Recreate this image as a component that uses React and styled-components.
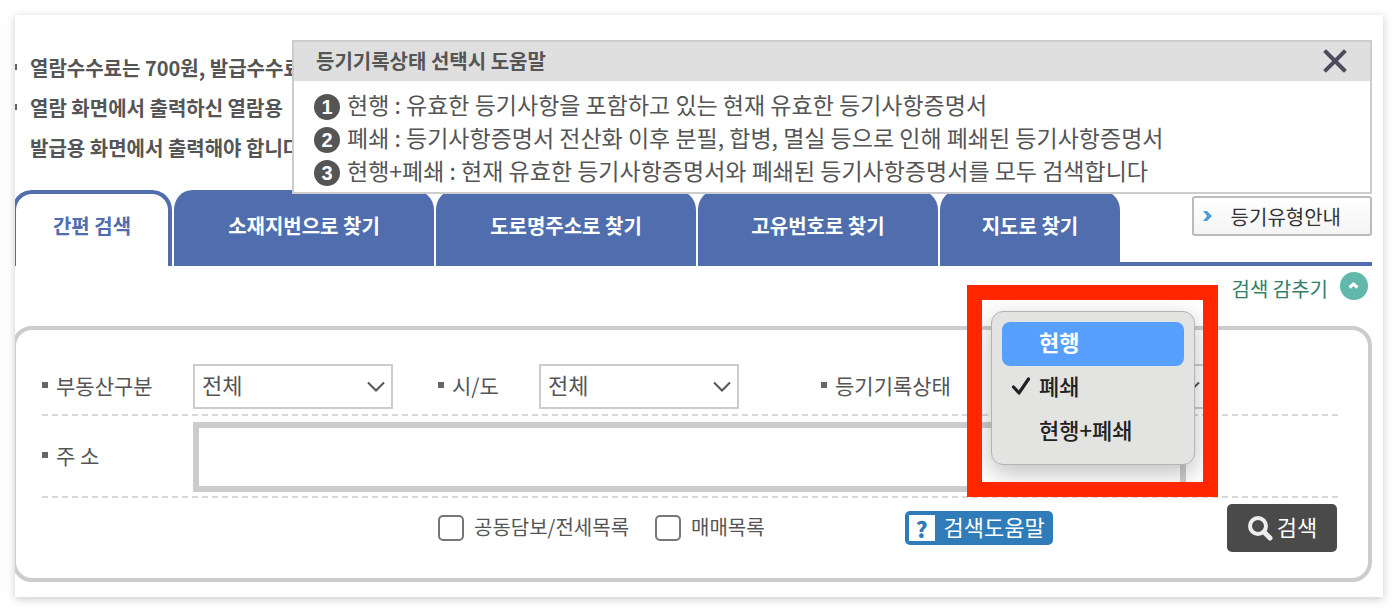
import { useState } from "react";
import styled, { createGlobalStyle } from "styled-components";

const tabs = [
	{ name: "간편 검색", width: 154 },
	{ name: "소재지번으로 찾기", width: 262 },
	{ name: "도로명주소로 찾기", width: 262 },
	{ name: "고유번호로 찾기", width: 242 },
	{ name: "지도로 찾기", width: 182 },
];

const statuses = ["현행", "폐쇄", "현행+폐쇄"];

const helpTexts = [
	"현행 : 유효한 등기사항을 포함하고 있는 현재 유효한 등기사항증명서",
	"폐쇄 : 등기사항증명서 전산화 이후 분필, 합병, 멸실 등으로 인해 폐쇄된 등기사항증명서",
	"현행+폐쇄 : 현재 유효한 등기사항증명서와 폐쇄된 등기사항증명서를 모두 검색합니다",
];

const StatusHelp = (props) => {
	const { setShow } = props;
	return (
		<HelpBox>
			<HelpHeader>
				<HelpTitle>등기기록상태 선택시 도움말</HelpTitle>
				<CloseButton aria-label="닫기" onClick={() => setShow(false)}>
					<svg width="26" height="26" viewBox="0 0 26 26">
						<path
							d="M4 3L22 21M22 3L4 21"
							stroke="#4d4b5c"
							strokeWidth="4"
							strokeLinecap="square"
						/>
					</svg>
				</CloseButton>
			</HelpHeader>
			<HelpList>
				{helpTexts.map((text, index) => (
					<HelpItem key={text}>
						<HelpNumber>{index + 1}</HelpNumber>
						<HelpText>{text}</HelpText>
					</HelpItem>
				))}
			</HelpList>
		</HelpBox>
	);
};

const StatusMenu = (props) => {
	const { status, setStatus } = props;
	const [active, setActive] = useState("현행");
	return (
		<Menu role="listbox" aria-label="등기기록상태">
			{statuses.map((name) => (
				<MenuItem
					key={name}
					type="button"
					role="option"
					aria-selected={status === name}
					$active={active === name}
					onMouseEnter={() => setActive(name)}
					onClick={() => setStatus(name)}
				>
					<MenuMark>
						{status === name && (
							<svg width="20" height="20" viewBox="0 0 20 20">
								<path
									d="M2.5 12L8 18L17.5 4"
									fill="none"
									stroke="#222"
									strokeWidth="3.2"
									strokeLinecap="round"
									strokeLinejoin="round"
								/>
							</svg>
						)}
					</MenuMark>
					{name}
				</MenuItem>
			))}
		</Menu>
	);
};

const SelectBox = (props) => {
	const { id, value, onChange, options, children } = props;
	return (
		<SelectWrap>
			<Select id={id} value={value} onChange={onChange}>
				{options.map((name) => (
					<option key={name}>{name}</option>
				))}
			</Select>
			<SelectArrow width="18" height="12" viewBox="0 0 18 12">
				<path
					d="M1 1.5L9 9.5L17 1.5"
					fill="none"
					stroke="#555"
					strokeWidth="2"
				/>
			</SelectArrow>
			{children}
		</SelectWrap>
	);
};

export default function App() {
	const [show, setShow] = useState(true);
	const [tab, setTab] = useState("간편 검색");
	const [status, setStatus] = useState("폐쇄");
	const [address, setAddress] = useState("");
	return (
		<>
			<GlobalStyle />
			<Page>
				<Notices>
					<Notice>열람수수료는 700원, 발급수수료</Notice>
					<Notice>
						열람 화면에서 출력하신 열람용
						<br />
						발급용 화면에서 출력해야 합니다
					</Notice>
				</Notices>
				{show && <StatusHelp setShow={setShow} />}
				<TabBar>
					{tabs.map((item) => (
						<Tab
							key={item.name}
							$width={item.width}
							$active={tab === item.name}
							onClick={() => setTab(item.name)}
						>
							{item.name}
						</Tab>
					))}
					<TabRest>
						<GuideButton>
							<svg width="10" height="12" viewBox="0 0 10 12">
								<path d="M0 1H4L9 6L4 11H0L4 6Z" fill="#4e9fd8" />
							</svg>
							<span>등기유형안내</span>
						</GuideButton>
					</TabRest>
				</TabBar>
				<HideRow>
					<HideLink href="#search">
						<HideText>검색 감추기</HideText>
						<svg width="28" height="28" viewBox="0 0 28 28">
							<circle cx="14" cy="14" r="14" fill="#61b9ab" />
							<path
								d="M9.5 15.5L13.5 12L17.5 15.5"
								fill="none"
								stroke="#fff"
								strokeWidth="3"
							/>
						</svg>
					</HideLink>
				</HideRow>
				<SearchPanel id="search" onSubmit={(e) => e.preventDefault()}>
					<FieldRow>
						<Label htmlFor="kind" $width={151}>
							부동산구분
						</Label>
						<SelectBox id="kind" options={["전체"]} />
						<Spacer $grow={45} />
						<Label htmlFor="city" $width={101}>
							시/도
						</Label>
						<SelectBox id="city" options={["전체"]} />
						<Spacer $grow={82} />
						<Label htmlFor="status" $width={187}>
							등기기록상태
						</Label>
						<SelectBox
							id="status"
							value={status}
							onChange={(e) => setStatus(e.target.value)}
							options={statuses}
						>
							<StatusMenu status={status} setStatus={setStatus} />
							<Highlight />
						</SelectBox>
						<Spacer $grow={134} />
					</FieldRow>
					<Divider />
					<FieldRow>
						<Label htmlFor="address" $width={151}>
							주 소
						</Label>
						<AddressInput
							id="address"
							value={address}
							onChange={(e) => setAddress(e.target.value)}
						/>
					</FieldRow>
					<Divider />
					<ActionRow>
						<CheckLabel>
							<CheckBox type="checkbox" />
							<CheckText>공동담보/전세목록</CheckText>
						</CheckLabel>
						<CheckLabel>
							<CheckBox type="checkbox" />
							<CheckText>매매목록</CheckText>
						</CheckLabel>
						<Spacer $grow={139} />
						<HelpButton type="button" onClick={() => setShow(true)}>
							<QuestionMark>?</QuestionMark>
							<ButtonText>검색도움말</ButtonText>
						</HelpButton>
						<Spacer $grow={173} />
						<SearchButton>
							<svg width="26" height="26" viewBox="0 0 26 26">
								<circle
									cx="11"
									cy="11"
									r="8"
									fill="none"
									stroke="#eee"
									strokeWidth="4"
								/>
								<path
									d="M17 17L23 23"
									stroke="#eee"
									strokeWidth="5"
									strokeLinecap="round"
								/>
							</svg>
							<ButtonText>검색</ButtonText>
						</SearchButton>
					</ActionRow>
				</SearchPanel>
			</Page>
		</>
	);
}

const GlobalStyle = createGlobalStyle`
	* {
		box-sizing: border-box;
	}
	body {
		margin: 0;
		background: #fefefe;
		color: #555;
		font-family: "Noto Sans CJK KR", sans-serif;
		font-size: 20px;
	}
	button, input, select {
		margin: 0;
		padding: 0;
		border: none;
		color: inherit;
		font: inherit;
	}
	button {
		cursor: pointer;
	}
	svg {
		display: block;
		flex: none;
	}
`;
const Page = styled.main`
	position: relative;
	margin: 15px;
	padding: 33px 11px 15px 0;
	min-width: 1280px;
	background: #fff;
	box-shadow: 0 2px 8px rgba(0, 0, 0, 0.2);
	overflow: hidden;
`;
const Notices = styled.ul`
	margin: 0 0 22px;
	padding: 0 0 0 15px;
	list-style: none;
	font-weight: bold;
	line-height: 40px;
`;
const Notice = styled.li`
	position: relative;
	&::before {
		content: "";
		position: absolute;
		top: 16px;
		left: -19px;
		width: 6px;
		height: 6px;
		background: #666;
	}
`;
const HelpBox = styled.section`
	position: absolute;
	top: 25px;
	left: 277px;
	right: 11px;
	z-index: 1;
	border: 2px solid #ccc;
	background: #fff;
`;
const HelpHeader = styled.div`
	display: flex;
	align-items: center;
	justify-content: space-between;
	height: 39px;
	padding: 0 22px;
	background: #dfdfdf;
`;
const HelpTitle = styled.h2`
	margin: 0;
	padding-bottom: 2px;
	font-size: 20px;
	font-weight: bold;
	line-height: 36px;
`;
const CloseButton = styled.button`
	background: none;
`;
const HelpList = styled.ol`
	margin: 0;
	padding: 9px 20px 3px;
	list-style: none;
	font-size: 23px;
`;
const HelpItem = styled.li`
	display: flex;
	align-items: center;
	gap: 7px;
	height: 33px;
	line-height: 33px;
`;
const HelpText = styled.span`
	padding-bottom: 4px;
	white-space: nowrap;
`;
const HelpNumber = styled.span`
	width: 26px;
	height: 26px;
	border-radius: 50%;
	background: #555;
	color: #fff;
	font-family: "Liberation Sans", sans-serif;
	font-size: 20px;
	font-weight: bold;
	line-height: 26px;
	text-align: center;
`;
const TabBar = styled.nav`
	display: flex;
	height: 76px;
`;
const Tab = styled.button`
	flex: none;
	width: ${(props) => props.$width}px;
	padding-bottom: 6px;
	border-radius: 20px 20px 0 0;
	background: #506eae;
	color: #fff;
	font-weight: bold;
	& + & {
		border-left: 2px solid #fff;
	}
	${(props) =>
		props.$active &&
		`
		padding-bottom: 10px;
		border: 4px solid #506eae;
		border-bottom: none;
		background: #fff;
		color: #506eae;
	`}
	&:first-child {
		margin-left: -3px;
		width: ${(props) => props.$width + 6}px;
	}
`;
const TabRest = styled.div`
	display: flex;
	flex: 1;
	align-items: flex-start;
	justify-content: flex-end;
	padding-top: 6px;
	border-bottom: 4px solid #506eae;
`;
const GuideButton = styled.button`
	display: flex;
	align-items: center;
	justify-content: space-between;
	width: 180px;
	height: 40px;
	padding: 0 29px 0 9px;
	border: 2px solid #bbb;
	border-radius: 3px;
	background: linear-gradient(#fff, #f4f4f4);
	color: #333;
`;
const HideRow = styled.div`
	display: flex;
	justify-content: flex-end;
	padding: 6px 4px 26px;
`;
const HideLink = styled.a`
	display: flex;
	align-items: center;
	gap: 12px;
	height: 28px;
	color: #2f8067;
	text-decoration: none;
`;
const HideText = styled.span`
	padding-top: 4px;
`;
const SearchPanel = styled.form`
	margin-left: -3px;
	padding: 34px 26px 26px;
	border: 4px solid #ccc;
	border-radius: 20px;
`;
const FieldRow = styled.div`
	display: flex;
	align-items: center;
	&:first-child {
		padding-bottom: 1px;
	}
`;
const Label = styled.label`
	display: flex;
	align-items: center;
	gap: 8px;
	flex: none;
	width: ${(props) => props.$width}px;
	padding-bottom: 4px;
	font-size: 21px;
	&::before {
		content: "";
		width: 6px;
		height: 6px;
		background: #666;
	}
`;
const Spacer = styled.div`
	flex: ${(props) => props.$grow} 1 0;
`;
const SelectWrap = styled.div`
	position: relative;
	flex: none;
	width: 200px;
	height: 45px;
`;
const Select = styled.select`
	width: 100%;
	height: 100%;
	padding: 0 32px 6px 7px;
	appearance: none;
	border: 2px solid #ccc;
	background: #fff;
	font-size: 22px;
`;
const SelectArrow = styled.svg`
	position: absolute;
	top: 17px;
	right: 8px;
	pointer-events: none;
`;
const Menu = styled.div`
	position: absolute;
	top: -53px;
	left: -17px;
	z-index: 2;
	width: 204px;
	padding: 10px;
	border: 1px solid #b4b4b4;
	border-radius: 12px;
	background: #e3e3e1;
	box-shadow: 0 8px 24px rgba(0, 0, 0, 0.25);
`;
const MenuItem = styled.button`
	display: flex;
	align-items: center;
	width: 100%;
	height: 44px;
	padding: 0 0 6px 9px;
	border-radius: 8px;
	background: ${(props) => (props.$active ? "#579fff" : "none")};
	color: ${(props) => (props.$active ? "#fff" : "#222")};
	font-size: 22px;
	font-weight: ${(props) => (props.$active ? "bold" : 500)};
`;
const MenuMark = styled.span`
	width: 28px;
`;
const Highlight = styled.div`
	position: absolute;
	top: -79px;
	left: -41px;
	z-index: 3;
	width: 251px;
	height: 212px;
	border: 15px solid #ff2600;
	pointer-events: none;
`;
const Divider = styled.div`
	height: 2px;
	margin: 4px 0 6px;
	background: repeating-linear-gradient(
		90deg,
		#d8d8d8 0 6px,
		transparent 6px 10px
	);
`;
const AddressInput = styled.input`
	flex: 1;
	height: 70px;
	margin-right: 156px;
	padding: 0 10px;
	border: 6px solid #ccc;
	background: #fff;
	font-size: 22px;
`;
const ActionRow = styled.div`
	display: flex;
	align-items: center;
	height: 48px;
	padding: 0 5px 0 396px;
`;
const CheckLabel = styled.label`
	display: flex;
	align-items: center;
	gap: 10px;
	margin-right: 26px;
	&:nth-child(2) {
		margin-right: 0;
	}
`;
const CheckText = styled.span`
	padding-bottom: 4px;
`;
const CheckBox = styled.input`
	width: 26px;
	height: 26px;
	appearance: none;
	border: 2px solid #767676;
	border-radius: 5px;
	background: #fff;
	&:checked {
		background: #506eae;
	}
`;
const ButtonText = styled.span`
	padding-bottom: 4px;
	line-height: 30px;
`;
const HelpButton = styled.button`
	display: flex;
	align-items: center;
	justify-content: space-between;
	width: 148px;
	height: 34px;
	padding: 0 8px 0 4px;
	border-radius: 5px;
	background: #2f7cb8;
	color: #fff;
	font-size: 22px;
`;
const QuestionMark = styled.span`
	width: 26px;
	height: 26px;
	background: #fff;
	color: #2f7cb8;
	font-weight: 900;
	line-height: 26px;
`;
const SearchButton = styled.button`
	display: flex;
	align-items: center;
	justify-content: center;
	gap: 4px;
	width: 110px;
	height: 48px;
	border-radius: 5px;
	background: #4a4a4a;
	color: #fff;
	font-size: 22px;
`;
